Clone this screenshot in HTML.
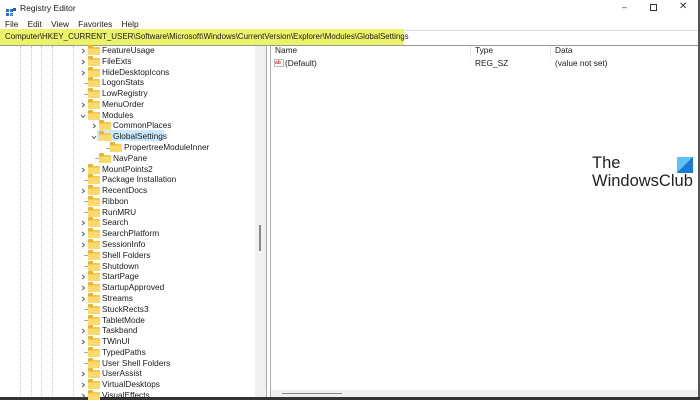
<!DOCTYPE html>
<html><head><meta charset="utf-8">
<style>
*{margin:0;padding:0;box-sizing:border-box}
body{width:700px;height:400px;overflow:hidden;background:#fff;font-family:"Liberation Sans",sans-serif;color:#1a1a1a;position:relative}
.a{position:absolute;white-space:nowrap}
.t{font-size:8.3px;line-height:11px}
.vl{position:absolute;top:46px;height:352px;width:0;border-left:1px dotted #c8c8c8}
.f{position:absolute;width:12px;height:8px;background:#f7c948;border-radius:1px}
.f:before{content:"";position:absolute;left:0;top:-2px;width:5px;height:3px;background:#e9b530;border-radius:1px 1px 0 0}
.f:after{content:"";position:absolute;left:0;top:2px;width:12px;height:6px;background:#fbd96b}
.ch{position:absolute;width:6px;height:6px}
</style></head><body>
<div class="a" style="left:6px;top:4px;width:10px;height:9px">
<svg width="10" height="9"><rect x="0" y="1" width="3" height="3" fill="#2a6fc9"/><rect x="4" y="1" width="3" height="3" fill="#2a6fc9"/><rect x="0" y="5" width="3" height="3" fill="#2a6fc9"/><rect x="4" y="5" width="3" height="3" fill="#4a90e2"/><rect x="7" y="0" width="3" height="3" fill="#1d5bb5"/></svg></div>
<div class="a" style="left:20px;top:3px;font-size:8.5px">Registry Editor</div>
<div class="a" style="left:622px;top:2px;font-size:9px;color:#333">&#8211;</div>
<div class="a" style="left:650px;top:4px;width:7px;height:7px;border:1px solid #333"></div>
<div class="a" style="left:679px;top:1px;font-size:10px;color:#333">&#10005;</div>
<div class="a" style="left:5px;top:19px;font-size:8.3px">File&nbsp;&nbsp;&nbsp;&nbsp;Edit&nbsp;&nbsp;&nbsp;&nbsp;View&nbsp;&nbsp;&nbsp;&nbsp;Favorites&nbsp;&nbsp;&nbsp;&nbsp;Help</div>
<div class="a" style="left:0;top:29px;width:404px;height:16px;background:#ecf26a"></div>
<div class="a" style="left:0;top:45px;width:700px;height:1px;background:#999"></div>
<div class="a" style="left:404px;top:30px;width:294px;height:1px;background:#ddd"></div>
<div class="a" style="left:5px;top:32px;font-size:7.95px">Computer\HKEY_CURRENT_USER\Software\Microsoft\Windows\CurrentVersion\Explorer\Modules\GlobalSettings</div>
<div class="a" style="left:698px;top:0;width:2px;height:400px;background:#555"></div>
<div class="vl" style="left:20px"></div><div class="vl" style="left:31px"></div><div class="vl" style="left:41px"></div><div class="vl" style="left:52px"></div><div class="vl" style="left:73px"></div>
<div class="a" style="left:255px;top:46px;width:11px;height:352px;background:#f0f0f0"></div>
<div class="a" style="left:259px;top:225px;width:2px;height:26px;background:#888"></div>
<div class="a" style="left:266px;top:46px;width:1px;height:352px;background:#aaa"></div>
<div class="a" style="left:270px;top:46px;width:1px;height:352px;background:#aaa"></div>
<div class="a" style="left:271px;top:390px;width:427px;height:8px;background:#f0f0f0"></div>
<div class="a" style="left:282px;top:393px;width:60px;height:1px;background:#888"></div>
<div class="a" style="left:0;top:397px;width:700px;height:3px;background:#333"></div>
<div class="a" style="left:97px;top:130px;width:67px;height:11px;background:#cce8ff"></div>
<div id="tree"></div>
<div class="a t" style="left:275px;top:45px">Name</div>
<div class="a t" style="left:475px;top:45px">Type</div>
<div class="a t" style="left:555px;top:45px">Data</div>
<div class="a" style="left:470px;top:46px;width:1px;height:11px;background:#e5e5e5"></div>
<div class="a" style="left:550px;top:46px;width:1px;height:11px;background:#e5e5e5"></div>
<div class="a" style="left:274px;top:59px;width:10px;height:8px;border:1px solid #bbb;background:#fff;font-size:5px;color:#d33;line-height:6px;font-weight:bold">ab</div>
<div class="a t" style="left:285px;top:58px">(Default)</div>
<div class="a t" style="left:475px;top:58px">REG_SZ</div>
<div class="a t" style="left:555px;top:58px">(value not set)</div>
<div class="a" style="left:592px;top:154px;font-size:16.5px;color:#222;line-height:18px">The<br>WindowsClub</div>
<div class="a" style="left:677px;top:157px;width:16px;height:16px;background:linear-gradient(135deg,#5ec2f2 50%,#1c79d4 50%)"></div>
<script>
var rows=[[1,"FeatureUsage",1],[1,"FileExts",1],[1,"HideDesktopIcons",1],[1,"LogonStats",0],[1,"LowRegistry",0],[1,"MenuOrder",1],[1,"Modules",2],[2,"CommonPlaces",1],[2,"GlobalSettings",2],[3,"PropertreeModuleInner",0],[2,"NavPane",0],[1,"MountPoints2",1],[1,"Package Installation",0],[1,"RecentDocs",1],[1,"Ribbon",0],[1,"RunMRU",0],[1,"Search",1],[1,"SearchPlatform",1],[1,"SessionInfo",1],[1,"Shell Folders",0],[1,"Shutdown",0],[1,"StartPage",1],[1,"StartupApproved",1],[1,"Streams",1],[1,"StuckRects3",0],[1,"TabletMode",0],[1,"Taskband",1],[1,"TWinUI",1],[1,"TypedPaths",0],[1,"User Shell Folders",0],[1,"UserAssist",1],[1,"VirtualDesktops",1],[1,"VisualEffects",1]];
var h="";
rows.forEach(function(r,i){
 var y=45+i*10.78, o=(r[0]-1)*11;
 if(r[2]==1)h+='<svg class="ch" style="left:'+(80+o)+'px;top:'+(y+3)+'px" viewBox="0 0 6 6"><path d="M2 1 L4.5 3 L2 5" fill="none" stroke="#555" stroke-width="0.9"/></svg>';
 else if(r[2]==2)h+='<svg class="ch" style="left:'+(80+o)+'px;top:'+(y+3)+'px" viewBox="0 0 6 6"><path d="M1 2 L3 4.5 L5 2" fill="none" stroke="#555" stroke-width="0.9"/></svg>';
 else h+='<div class="a" style="left:'+(84+o)+'px;top:'+(y+5.5)+'px;width:4px;height:1px;background:#aaa"></div>';
 h+='<div class="f" style="left:'+(88+o)+'px;top:'+(y+2)+'px"></div>';
 h+='<div class="a t" style="left:'+(102+o)+'px;top:'+y+'px">'+r[1]+'</div>';
});
document.getElementById("tree").innerHTML=h;
</script>
</body></html>
